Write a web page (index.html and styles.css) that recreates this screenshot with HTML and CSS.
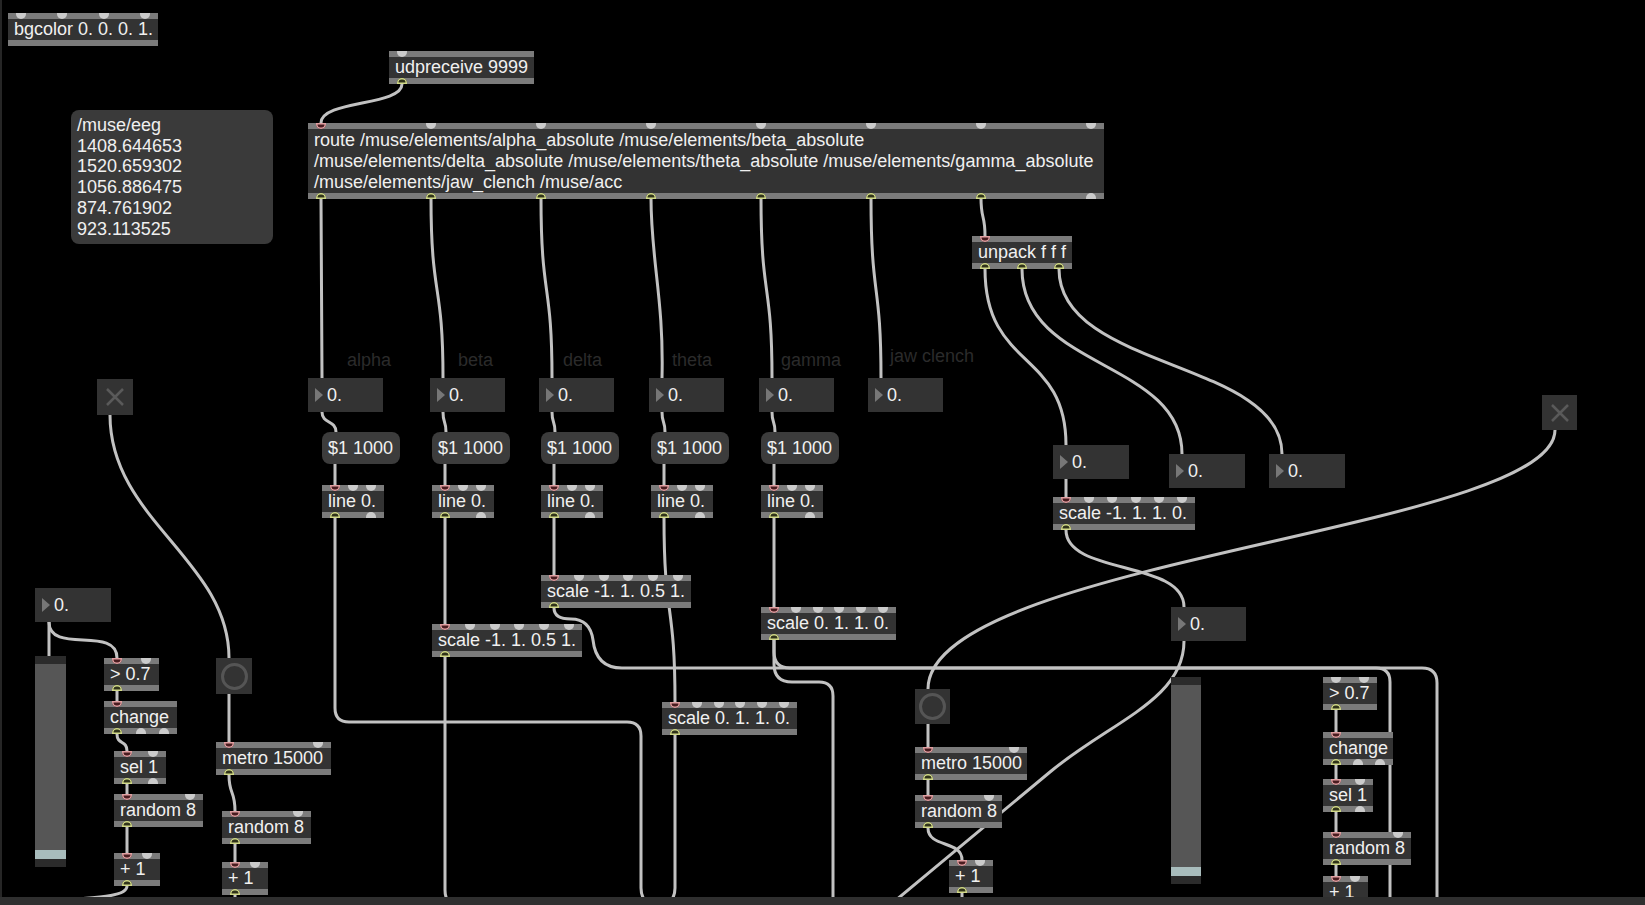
FILE: index.html
```html
<!DOCTYPE html>
<html lang="en">
<head>
  <meta charset="UTF-8">
  <title>muse_osc.maxpat</title>
  <link rel="stylesheet" href="styles.css">
</head>
<body>

<div class="patcher">

  <!-- patch cords -->
  <svg class="cords" width="1645" height="897" viewBox="0 0 1645 897">
    <path d="M402,84 C402,106 321,100 321,123"/>
    <path d="M321,198 C321,300 322,280 322,378"/>
    <path d="M431,198 C431,300 443,280 443,378"/>
    <path d="M541,198 C541,300 552,280 552,378"/>
    <path d="M651,198 C651,260 664,300 662,378"/>
    <path d="M761,198 C761,300 772,280 772,378"/>
    <path d="M871,198 C871,300 881,280 881,378"/>
    <path d="M981,198 C981,220 985,214 985,236"/>

    <path d="M322,412 C322,424 336,420 336,432"/>
    <path d="M443,412 C443,424 446,420 446,432"/>
    <path d="M552,412 C552,424 555,420 555,432"/>
    <path d="M662,412 C662,424 665,420 665,432"/>
    <path d="M772,412 C772,424 775,420 775,432"/>
    <path d="M335,464 L335,485"/>
    <path d="M445,464 L445,485"/>
    <path d="M554,464 L554,485"/>
    <path d="M664,464 L664,485"/>
    <path d="M774,464 L774,485"/>

    <path d="M335,518 L335,708 Q335,722 349,722 L627,722 Q641,722 641,736 L641,888 Q641,898 649,906"/>
    <path d="M445,518 L445,624"/>
    <path d="M445,657 L445,890 Q445,900 452,906"/>
    <path d="M554,518 L554,575"/>
    <path d="M554,608 Q554,619 571,619 Q590,619 593,640 Q596,668 622,668 L1422,668 Q1437,668 1437,683 L1437,906"/>
    <path d="M664,518 C664,620 675,600 675,702"/>
    <path d="M675,735 L675,888 Q675,899 666,906"/>
    <path d="M774,518 L774,607"/>
    <path d="M774,640 L774,652 Q774,668 790,668 L1376,668 Q1390,668 1390,682 L1390,906"/>
    <path d="M774,640 L774,664 Q774,682 792,682 L819,682 Q833,682 833,696 L833,906"/>

    <path d="M985,269 C985,370 1066,350 1066,445"/>
    <path d="M1022,269 C1022,370 1182,360 1182,454"/>
    <path d="M1059,269 C1059,370 1282,360 1282,454"/>
    <path d="M1066,479 L1066,497"/>
    <path d="M1066,530 C1066,575 1184,560 1184,607"/>
    <path d="M1184,641 C1184,700 1110,722 1050,772 L872,920"/>

    <path d="M1555,430 C1555,530 928,560 928,689"/>
    <path d="M928,724 L928,747"/>
    <path d="M928,780 L928,795"/>
    <path d="M928,828 C928,848 962,840 962,860"/>
    <path d="M962,893 L962,906"/>

    <path d="M110,415 C110,520 229,560 229,658"/>
    <path d="M229,694 L229,742"/>
    <path d="M229,775 C229,795 235,790 235,811"/>
    <path d="M235,844 L235,862"/>
    <path d="M235,895 L235,906"/>

    <path d="M49,622 L49,656"/>
    <path d="M49,622 C49,655 117,625 117,658"/>
    <path d="M117,691 L117,701"/>
    <path d="M117,734 C117,745 127,740 127,751"/>
    <path d="M127,784 L127,794"/>
    <path d="M127,827 L127,853"/>
    <path d="M127,886 C127,902 60,896 8,906"/>

    <path d="M1336,710 L1336,732"/>
    <path d="M1336,765 L1336,779"/>
    <path d="M1336,812 L1336,832"/>
    <path d="M1336,865 L1336,876"/>
  </svg>

  <!-- top -->
  <div class="obj" style="left:8px;top:13px;width:150px">
    <div class="ins"><i></i><i></i><i></i><i></i></div>
    <div class="txt">bgcolor 0. 0. 0. 1.</div>
    <div class="outs"></div>
  </div>

  <div class="obj" style="left:389px;top:51px;width:145px">
    <div class="ins"><i></i></div>
    <div class="txt">udpreceive 9999</div>
    <div class="outs"><i class="on"></i></div>
  </div>

  <div class="msg eeg" style="left:71px;top:110px;width:202px">
    /muse/eeg<br>1408.644653<br>1520.659302<br>1056.886475<br>874.761902<br>923.113525
  </div>

  <div class="obj route" style="left:308px;top:123px;width:796px">
    <div class="ins"><i class="on"></i><i></i><i></i><i></i><i></i><i></i><i></i><i></i></div>
    <div class="txt">route /muse/elements/alpha_absolute /muse/elements/beta_absolute<br>/muse/elements/delta_absolute /muse/elements/theta_absolute /muse/elements/gamma_absolute<br>/muse/elements/jaw_clench /muse/acc</div>
    <div class="outs"><i class="on"></i><i class="on"></i><i class="on"></i><i class="on"></i><i class="on"></i><i class="on"></i><i class="on"></i><i></i></div>
  </div>

  <div class="obj" style="left:972px;top:236px;width:100px">
    <div class="ins"><i class="on"></i></div>
    <div class="txt">unpack f f f</div>
    <div class="outs"><i class="on"></i><i class="on"></i><i class="on"></i></div>
  </div>

  <!-- band rows -->
  <span class="lbl" style="left:347px;top:349px">alpha</span>
  <span class="lbl" style="left:458px;top:349px">beta</span>
  <span class="lbl" style="left:563px;top:349px">delta</span>
  <span class="lbl" style="left:672px;top:349px">theta</span>
  <span class="lbl" style="left:781px;top:349px">gamma</span>
  <span class="lbl" style="left:890px;top:345px">jaw clench</span>

  <div class="num" style="left:308px;top:378px;width:75px">0.</div>
  <div class="num" style="left:430px;top:378px;width:75px">0.</div>
  <div class="num" style="left:539px;top:378px;width:75px">0.</div>
  <div class="num" style="left:649px;top:378px;width:75px">0.</div>
  <div class="num" style="left:759px;top:378px;width:75px">0.</div>
  <div class="num" style="left:868px;top:378px;width:75px">0.</div>

  <div class="msg" style="left:322px;top:432px;width:78px">$1 1000</div>
  <div class="msg" style="left:432px;top:432px;width:78px">$1 1000</div>
  <div class="msg" style="left:541px;top:432px;width:78px">$1 1000</div>
  <div class="msg" style="left:651px;top:432px;width:78px">$1 1000</div>
  <div class="msg" style="left:761px;top:432px;width:78px">$1 1000</div>

  <div class="obj" style="left:322px;top:485px;width:62px">
    <div class="ins"><i class="on"></i><i></i><i></i></div>
    <div class="txt">line 0.</div>
    <div class="outs"><i class="on"></i><i></i></div>
  </div>
  <div class="obj" style="left:432px;top:485px;width:62px">
    <div class="ins"><i class="on"></i><i></i><i></i></div>
    <div class="txt">line 0.</div>
    <div class="outs"><i class="on"></i><i></i></div>
  </div>
  <div class="obj" style="left:541px;top:485px;width:62px">
    <div class="ins"><i class="on"></i><i></i><i></i></div>
    <div class="txt">line 0.</div>
    <div class="outs"><i class="on"></i><i></i></div>
  </div>
  <div class="obj" style="left:651px;top:485px;width:62px">
    <div class="ins"><i class="on"></i><i></i><i></i></div>
    <div class="txt">line 0.</div>
    <div class="outs"><i class="on"></i><i></i></div>
  </div>
  <div class="obj" style="left:761px;top:485px;width:62px">
    <div class="ins"><i class="on"></i><i></i><i></i></div>
    <div class="txt">line 0.</div>
    <div class="outs"><i class="on"></i><i></i></div>
  </div>

  <div class="obj" style="left:541px;top:575px;width:150px">
    <div class="ins"><i class="on"></i><i></i><i></i><i></i><i></i><i></i></div>
    <div class="txt">scale -1. 1. 0.5 1.</div>
    <div class="outs"><i class="on"></i></div>
  </div>
  <div class="obj" style="left:432px;top:624px;width:150px">
    <div class="ins"><i class="on"></i><i></i><i></i><i></i><i></i><i></i></div>
    <div class="txt">scale -1. 1. 0.5 1.</div>
    <div class="outs"><i class="on"></i></div>
  </div>
  <div class="obj" style="left:761px;top:607px;width:135px">
    <div class="ins"><i class="on"></i><i></i><i></i><i></i><i></i><i></i></div>
    <div class="txt">scale 0. 1. 1. 0.</div>
    <div class="outs"><i class="on"></i></div>
  </div>
  <div class="obj" style="left:662px;top:702px;width:135px">
    <div class="ins"><i class="on"></i><i></i><i></i><i></i><i></i><i></i></div>
    <div class="txt">scale 0. 1. 1. 0.</div>
    <div class="outs"><i class="on"></i></div>
  </div>

  <!-- accelerometer -->
  <div class="num" style="left:1053px;top:445px;width:76px">0.</div>
  <div class="num" style="left:1169px;top:454px;width:76px">0.</div>
  <div class="num" style="left:1269px;top:454px;width:76px">0.</div>
  <div class="obj" style="left:1053px;top:497px;width:142px">
    <div class="ins"><i class="on"></i><i></i><i></i><i></i><i></i><i></i></div>
    <div class="txt">scale -1. 1. 1. 0.</div>
    <div class="outs"><i class="on"></i></div>
  </div>
  <div class="num" style="left:1171px;top:607px;width:75px">0.</div>

  <!-- left voice -->
  <div class="tog" style="left:97px;top:379px">
    <svg width="20" height="20" viewBox="0 0 20 20"><path d="M2,2 L18,18 M18,2 L2,18"/></svg>
  </div>
  <div class="num" style="left:35px;top:588px;width:76px">0.</div>
  <div class="slider" style="left:35px;top:656px;width:31px;height:211px">
    <span class="cap"></span><span class="fill"></span><span class="knob"></span><span class="cap"></span>
  </div>

  <div class="obj" style="left:104px;top:658px;width:55px">
    <div class="ins"><i class="on"></i><i></i></div>
    <div class="txt">&gt; 0.7</div>
    <div class="outs"><i class="on"></i></div>
  </div>
  <div class="obj" style="left:104px;top:701px;width:73px">
    <div class="ins"><i class="on"></i></div>
    <div class="txt">change</div>
    <div class="outs"><i class="on"></i><i></i><i></i></div>
  </div>
  <div class="obj" style="left:114px;top:751px;width:52px">
    <div class="ins"><i class="on"></i><i></i></div>
    <div class="txt">sel 1</div>
    <div class="outs"><i class="on"></i><i></i></div>
  </div>
  <div class="obj" style="left:114px;top:794px;width:89px">
    <div class="ins"><i class="on"></i><i></i></div>
    <div class="txt">random 8</div>
    <div class="outs"><i class="on"></i></div>
  </div>
  <div class="obj" style="left:114px;top:853px;width:46px">
    <div class="ins"><i class="on"></i><i></i></div>
    <div class="txt">+ 1</div>
    <div class="outs"><i class="on"></i></div>
  </div>

  <div class="bang" style="left:216px;top:658px"><span></span></div>
  <div class="obj" style="left:216px;top:742px;width:115px">
    <div class="ins"><i class="on"></i><i></i></div>
    <div class="txt">metro 15000</div>
    <div class="outs"><i class="on"></i></div>
  </div>
  <div class="obj" style="left:222px;top:811px;width:89px">
    <div class="ins"><i class="on"></i><i></i></div>
    <div class="txt">random 8</div>
    <div class="outs"><i class="on"></i></div>
  </div>
  <div class="obj" style="left:222px;top:862px;width:46px">
    <div class="ins"><i class="on"></i><i></i></div>
    <div class="txt">+ 1</div>
    <div class="outs"><i class="on"></i></div>
  </div>

  <!-- right voice -->
  <div class="tog" style="left:1542px;top:395px;width:35px;height:35px">
    <svg width="20" height="20" viewBox="0 0 20 20"><path d="M2,2 L18,18 M18,2 L2,18"/></svg>
  </div>
  <div class="bang" style="left:915px;top:689px;width:35px;height:35px"><span></span></div>
  <div class="obj" style="left:915px;top:747px;width:112px">
    <div class="ins"><i class="on"></i><i></i></div>
    <div class="txt">metro 15000</div>
    <div class="outs"><i class="on"></i></div>
  </div>
  <div class="obj" style="left:915px;top:795px;width:87px">
    <div class="ins"><i class="on"></i><i></i></div>
    <div class="txt">random 8</div>
    <div class="outs"><i class="on"></i></div>
  </div>
  <div class="obj" style="left:949px;top:860px;width:44px">
    <div class="ins"><i class="on"></i><i></i></div>
    <div class="txt">+ 1</div>
    <div class="outs"><i class="on"></i></div>
  </div>

  <div class="slider" style="left:1171px;top:677px;width:30px;height:207px">
    <span class="cap"></span><span class="fill"></span><span class="knob"></span><span class="cap"></span>
  </div>

  <div class="obj" style="left:1323px;top:677px;width:54px">
    <div class="ins"><i></i><i></i></div>
    <div class="txt">&gt; 0.7</div>
    <div class="outs"><i class="on"></i></div>
  </div>
  <div class="obj" style="left:1323px;top:732px;width:70px">
    <div class="ins"><i class="on"></i></div>
    <div class="txt">change</div>
    <div class="outs"><i class="on"></i><i></i><i></i></div>
  </div>
  <div class="obj" style="left:1323px;top:779px;width:50px">
    <div class="ins"><i class="on"></i><i></i></div>
    <div class="txt">sel 1</div>
    <div class="outs"><i class="on"></i><i></i></div>
  </div>
  <div class="obj" style="left:1323px;top:832px;width:88px">
    <div class="ins"><i class="on"></i><i></i></div>
    <div class="txt">random 8</div>
    <div class="outs"><i class="on"></i></div>
  </div>
  <div class="obj" style="left:1323px;top:876px;width:45px">
    <div class="ins"><i class="on"></i><i></i></div>
    <div class="txt">+ 1</div>
    <div class="outs"><i class="on"></i></div>
  </div>

</div>
<div class="statusbar"></div>

</body>
</html>
```

FILE: styles.css
```css
body { margin: 0; height: 905px; display: flex; flex-direction: column; overflow: hidden; background: #000; color: #f0f0f0; font-family: "Liberation Sans", Arial, sans-serif; font-size: 18px; }
.patcher { position: relative; flex: 1; overflow: hidden; box-shadow: inset 2px 0 #262626; }
.statusbar { height: 8px; background: #2f2f2f; }

.cords { position: absolute; left: 0; top: 0; }
.cords path { fill: none; stroke: #c2c2c2; stroke-width: 3; stroke-linecap: round; }

/* object boxes */
.obj { position: absolute; display: flex; flex-direction: column; background: #333; }
.ins, .outs { height: 6px; display: flex; justify-content: space-between; padding: 0 8px; background: #7b7b7b; }
.ins { align-items: flex-start; }
.outs { align-items: flex-end; }
.ins i, .outs i { width: 10px; height: 6px; background: #cbcbcb; }
.ins i { border-radius: 0 0 5px 5px; }
.outs i { border-radius: 5px 5px 0 0; }
.ins i.on { background: #4a1c20; box-shadow: inset 0 0 0 1.5px #e2a0a2; }
.outs i.on { background: #30331a; box-shadow: inset 0 0 0 1.5px #d2da88; }
.txt { padding: 0 6px; line-height: 21px; white-space: nowrap; }
.route .txt { padding: 1px 6px 0; line-height: 21px; }

/* number boxes */
.num { position: absolute; height: 34px; display: flex; align-items: center; gap: 4px; padding-left: 7px; box-sizing: border-box; background: #333; }
.num::before { content: ""; border-left: 8px solid #777; border-top: 7.5px solid transparent; border-bottom: 7.5px solid transparent; }

/* message boxes */
.msg { position: absolute; height: 32px; padding: 4px 6px; box-sizing: border-box; line-height: 24px; white-space: nowrap; background: #3c3c3c; border-radius: 8px; }
.msg.eeg { height: 134px; padding: 5px 6px; line-height: 20.7px; background: #3a3a3a; }

.lbl { position: absolute; line-height: 22px; color: #2b2b2b; white-space: nowrap; }

/* ui objects */
.tog, .bang { position: absolute; width: 36px; height: 36px; display: flex; align-items: center; justify-content: center; background: #333; }
.tog svg path { stroke: #5a5a5a; stroke-width: 2.5; }
.bang span { width: 21px; height: 21px; border: 3px solid #555; border-radius: 50%; }

.slider { position: absolute; display: flex; flex-direction: column; background: #565656; }
.slider .cap { height: 8px; background: #2b2b2b; }
.slider .fill { flex: 1; }
.slider .knob { height: 9px; background: #a8bcbc; }
```
